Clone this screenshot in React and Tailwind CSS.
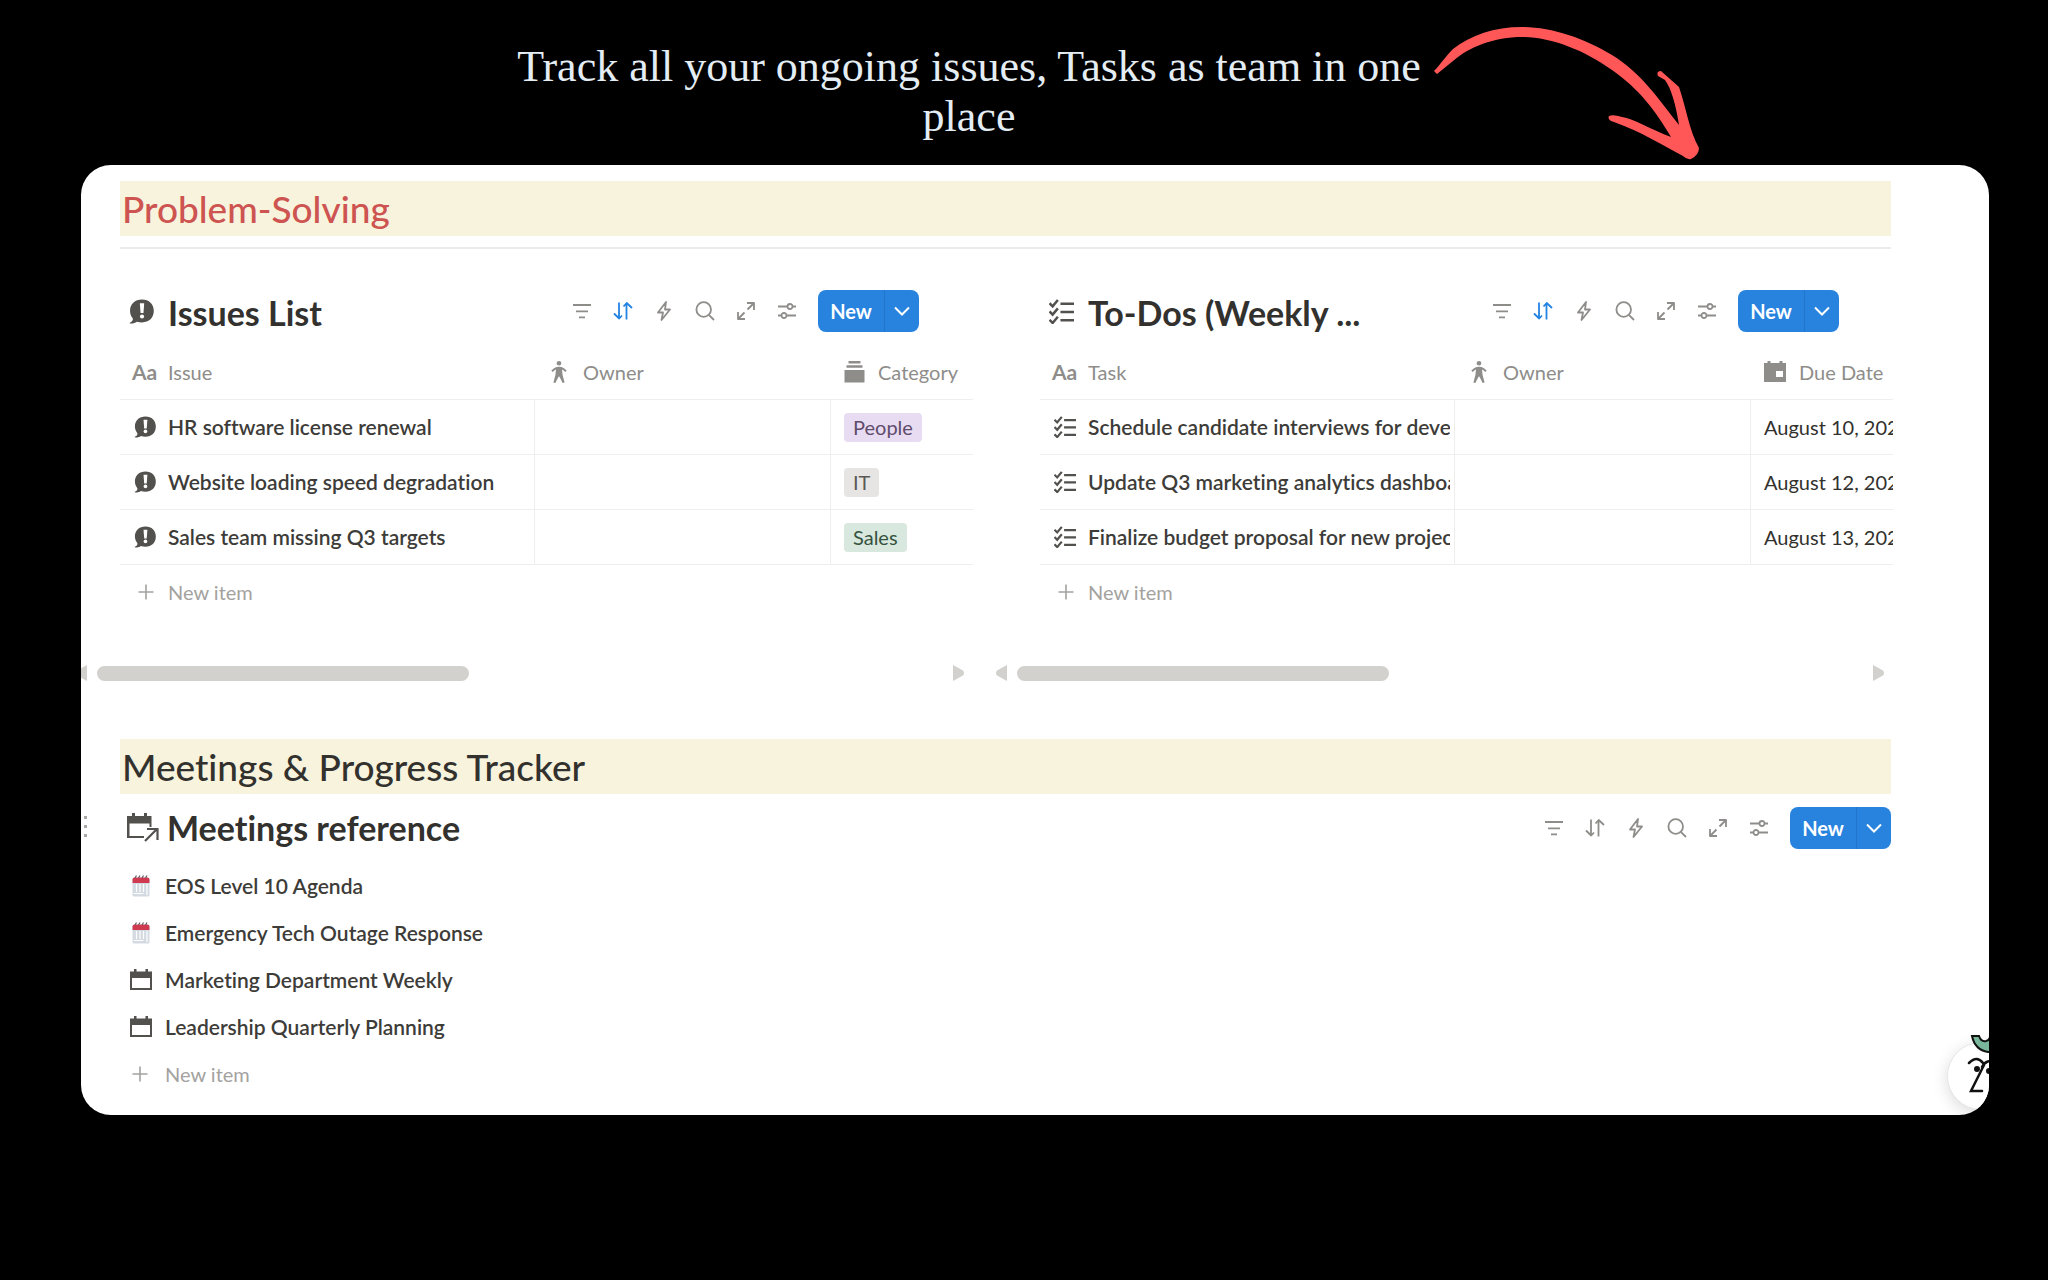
import React from "react";

const issues = [
  {
    name: "HR software license renewal",
    category: "People",
    tag: "bg-[#e7dcf1] text-[#5f4b6c]",
  },
  {
    name: "Website loading speed degradation",
    category: "IT",
    tag: "bg-[#e6e5e3] text-[#5a5956]",
  },
  {
    name: "Sales team missing Q3 targets",
    category: "Sales",
    tag: "bg-[#d8e8de] text-[#35523f]",
  },
];

const todos = [
  { name: "Schedule candidate interviews for developer role", due: "August 10, 2025" },
  { name: "Update Q3 marketing analytics dashboard", due: "August 12, 2025" },
  { name: "Finalize budget proposal for new project", due: "August 13, 2025" },
];

const meetings = [
  { name: "EOS Level 10 Agenda", emoji: true },
  { name: "Emergency Tech Outage Response", emoji: true },
  { name: "Marketing Department Weekly", emoji: false },
  { name: "Leadership Quarterly Planning", emoji: false },
];

const AlertBubble = ({ className }) => (
  <svg viewBox="0 0 24 24" className={className} aria-hidden="true">
    <path
      fill="#52514d"
      d="M12.5 0.5C5.6 0.5 1 5 1 11.2c0 3.300 1.200 5.800 2.700 7.600 0.300 1.900-1 3.200-3 3.900 0 0.600 0.500 0.800 1.300 0.800 2.200 0 4.200-0.700 5.600-1.700 1.400 0.500 3.100 0.700 4.900 0.700 6.800 0 11.300-4.400 11.300-11.100C23.800 5 19.300 0.500 12.500 0.500z"
    />
    <path fill="#fff" d="M10.400 4h4.200l-0.700 9.500h-2.800z" />
    <circle cx="12.500" cy="16.800" r="2" fill="#fff" />
  </svg>
);

const Checklist = ({ className }) => (
  <svg
    viewBox="0 0 24 24"
    className={className}
    fill="none"
    stroke="#52514d"
    strokeWidth="2.4"
    aria-hidden="true"
  >
    <path d="M11 4.500h13M11 12.500h13M11 20.500h13" />
    <path d="M0.500 4l3 3L8.500 1M0.500 12l3 3 5-6M0.500 20l3 3 5-6" />
  </svg>
);

const CalendarIcon = ({ className }) => (
  <svg viewBox="0 0 22 22" className={className} aria-hidden="true">
    <path
      fill="#52514d"
      fillRule="evenodd"
      d="M4 0h2.500v2.500h9V0H18v2.500h4V21H0V2.500h4zM2 9v10h18V9z"
    />
  </svg>
);

const CalendarLinkIcon = () => (
  <svg viewBox="0 0 32 30" className="h-[30px] w-8" aria-hidden="true">
    <path
      fill="#52514d"
      fillRule="evenodd"
      d="M5 0h3v3h9V0h3v3h4.500v11h-2v-3.500H2.500V23H17v2H0V3h5z"
    />
    <path fill="none" stroke="#52514d" strokeWidth="2.200" d="M18 28L29.500 16.500M20 16h10.500v11" />
  </svg>
);

const CalendarEmoji = () => (
  <svg viewBox="0 0 18 22" className="h-[22px] w-[18px]" aria-hidden="true">
    <rect x="0.500" y="3" width="17" height="18.500" rx="1.500" fill="#d3dae2" />
    <path d="M0.500 8h17V4.500a2 2 0 0 0-2-2h-13a2 2 0 0 0-2 2z" fill="#d03a50" />
    <path stroke="#5b5b63" strokeWidth="1.200" d="M3 3l1.500-2.500M6.500 3L8 .5M10 3l1.500-2.500M13.500 3L15 .5" />
    <path stroke="#fff" strokeWidth="1.200" d="M4.500 9v8M8 9v8M11.500 9v8M15 9v11M1.500 18.500h10" />
  </svg>
);

const PersonIcon = () => (
  <svg viewBox="0 0 16 22" className="h-[22px] w-4" fill="#8e8d8a" aria-hidden="true">
    <circle cx="8" cy="2.300" r="2.300" />
    <path d="M0.300 9.800C2 7.500 4.500 5.700 8 5.700s6 1.800 7.700 4.100l-1.400 1.300c-1.100-1.200-2-2-3.300-2.600l0.600 5.500 2 7.500-1.900 0.500L8.300 15.500h-0.600L4.300 22l-1.900-0.500 2-7.500L5 8.500C3.700 9.100 2.800 9.900 1.700 11.100z" />
  </svg>
);

const StackIcon = () => (
  <svg viewBox="0 0 21 22" className="h-[22px] w-[21px]" fill="#8e8d8a" aria-hidden="true">
    <path d="M4.500 0h12v2.400h-12zM2.500 4.200h16v2.600h-16zM0.500 9h20v12.500h-20z" />
  </svg>
);

const DueIcon = () => (
  <svg viewBox="0 0 22 22" className="h-[22px] w-[22px]" fill="#8e8d8a" aria-hidden="true">
    <path fillRule="evenodd" d="M3.500 0h3v2h9V0h3v2H22v19H0V2h3.500zM12 10v6h7v-6z" />
  </svg>
);

const PlusIcon = () => (
  <svg viewBox="0 0 16 16" className="size-4" fill="none" stroke="#a3a29f" strokeWidth="1.600" aria-hidden="true">
    <path d="M8 0.500v15M0.500 8h15" />
  </svg>
);

const AaIcon = () => (
  <span className="font-bold text-[21px] leading-6 text-[#8e8d8a]" aria-hidden="true">
    Aa
  </span>
);

const tools = [
  { label: "Filter", path: "M1 4h18M4 10.300h12M7 16.300h6" },
  { label: "Sort", path: "M6 1.500V18M1 12.500l5.200 5L9 14.500M13.500 18.500V2M10.500 5.500L13.700 2 19 7" },
  { label: "Automations", path: "M12 1L4 11.500h5L7.500 19 16 8.500h-5z" },
  { label: "Search", path: "M14.300 14.300L19 19M16 8.500a7.300 7.300 0 1 1-14.600 0a7.300 7.300 0 1 1 14.600 0z" },
  { label: "Open full page", path: "M2 18L8.500 11.500M11.500 8.500L18 2M11 2h7v7M2 11v7h7" },
  {
    label: "Settings",
    path: "M1 5.500h9.500M15.500 5.500H19M1 14.500h3.500M9.500 14.500H19M15.500 5.500a2.500 2.500 0 1 1-5 0a2.500 2.500 0 1 1 5 0zM9.500 14.500a2.500 2.500 0 1 1-5 0a2.500 2.500 0 1 1 5 0z",
  },
];

const Toolbar = ({ sorted }) => {
  return (
    <div className="flex shrink-0 items-center">
      <div className="mr-[21px] flex items-center gap-[21px]">
        {tools.map((tool) => (
          <button
            key={tool.label}
            aria-label={tool.label}
            className={sorted && tool.label === "Sort" ? "text-[#2383e2]" : "text-[#8e8d8a]"}
          >
            <svg
              viewBox="0 0 20 20"
              className="size-5"
              fill="none"
              stroke="currentColor"
              strokeWidth="1.800"
              strokeLinejoin="round"
            >
              <path d={tool.path} />
            </svg>
          </button>
        ))}
      </div>
      <div className="flex h-[42px] overflow-hidden rounded-lg bg-[#2783de] text-white">
        <button className="w-[66px] text-[20px] font-bold leading-6">New</button>
        <button
          aria-label="More options"
          className="flex w-[35px] items-center justify-center border-l border-[#2076cb]"
        >
          <svg viewBox="0 0 16 10" className="h-[10px] w-4" fill="none" stroke="currentColor" strokeWidth="2">
            <path d="M1 1.500l7 7 7-7" />
          </svg>
        </button>
      </div>
    </div>
  );
};

const Scroller = ({ label }) => (
  <div className="mt-[47px] -ml-[45px] mr-2 flex items-center" aria-label={label}>
    <button aria-label="Scroll left">
      <svg viewBox="0 0 12 16" className="h-4 w-3" fill="#d2d1cd">
        <path d="M12 0v16L2 10.500Q0 8 2 5.500z" />
      </svg>
    </button>
    <div className="mx-[10px] flex-1">
      <div className="h-[15px] w-[44%] rounded-full bg-[#d2d1cd]"></div>
    </div>
    <button aria-label="Scroll right">
      <svg viewBox="0 0 12 16" className="h-4 w-3" fill="#d2d1cd">
        <path d="M0 0v16l10-5.500Q12 8 10 5.500z" />
      </svg>
    </button>
  </div>
);

const Database = ({ title, icon, columns, lastIcon, children }) => {
  const Icon = icon;
  return (
    <div className="min-w-0">
      <div className="flex h-[58px] items-center justify-between pl-[9px] pr-[54px]">
        <h2 className="flex items-center gap-[14px] text-[34px] font-bold leading-10">
          <Icon className="size-[25px]" />
          <span className="pt-1">{title}</span>
        </h2>
        <Toolbar sorted />
      </div>
      <table className="w-full table-fixed border-separate border-spacing-0 text-[20px] leading-6">
        <colgroup>
          <col className="w-[415px]" />
          <col className="w-[296px]" />
          <col />
        </colgroup>
        <thead>
          <tr className="h-[60px] text-left text-[#8e8d8a]">
            <th className="border-b border-[#eeeeec] p-0 pt-1 pl-3 font-normal">
              <div className="flex items-center">
                <div className="w-9">
                  <AaIcon />
                </div>
                {columns[0]}
              </div>
            </th>
            <th className="border-b border-[#eeeeec] p-0 pt-1 pl-4 font-normal">
              <div className="flex items-center gap-4">
                <PersonIcon />
                {columns[1]}
              </div>
            </th>
            <th className="border-b border-[#eeeeec] p-0 pt-1 pl-[13px] font-normal">
              <div className="flex items-center gap-[13px] whitespace-nowrap">
                {lastIcon}
                {columns[2]}
              </div>
            </th>
          </tr>
        </thead>
        <tbody>{children}</tbody>
      </table>
      <button className="flex h-[53px] items-center gap-[14px] pl-[18px] text-[20px] leading-6 text-[#a3a29f]">
        <PlusIcon />
        New item
      </button>
      <Scroller label={title} />
    </div>
  );
};

const Row = ({ icon, name, children }) => {
  const Icon = icon;
  return (
    <tr className="h-[55px]">
      <td className="border-b border-r border-[#eeeeec] p-0 pl-[14px] pr-1">
        <div className="flex items-center gap-3 overflow-hidden whitespace-nowrap text-[21px] font-semibold text-[#3d3c39]">
          <Icon className="size-[22px] shrink-0" />
          {name}
        </div>
      </td>
      <td className="border-b border-r border-[#eeeeec] p-0"></td>
      <td className="overflow-hidden whitespace-nowrap border-b border-[#eeeeec] p-0 pl-[13px]">{children}</td>
    </tr>
  );
};

const Arrow = () => (
  <svg viewBox="1430 20 275 145" className="absolute left-full top-5 h-[145px] w-[275px]" aria-hidden="true">
    <path
      fill="#ff5757"
      d="M1434 71C1440 65 1445 57 1453 49C1471 35 1494 27 1522 27C1551 27 1584 38 1612 55C1642 74 1657 97 1679 125C1676 105 1671 88 1665 80L1658 76Q1656 71 1661 71L1679 87C1686 107 1689 130 1699 148Q1699 155 1691 159Q1687 160 1683 156C1664 146 1640 131 1614 122Q1607 120 1609 116Q1613 114 1622 117C1634 119 1650 129 1671 137C1655 110 1640 90 1612 70C1584 50 1551 37 1522 37C1494 37 1469 47 1453 61L1437 74Z"
    />
  </svg>
);

const Assistant = () => (
  <button
    aria-label="Open assistant"
    className="absolute -right-[26px] bottom-[5px] size-[68px] rounded-full border border-[#e6e6e4] bg-white shadow-[0_4px_16px_rgba(0,0,0,0.14)]"
  >
    <svg viewBox="0 0 68 78" className="absolute -top-[10px] left-0 h-[78px] w-[68px]" fill="none" stroke="#111" strokeWidth="2">
      <path fill="#79b69c" d="M24 3h7q2 6 7 5 4-1 4-5h10q-2 15-12 16Q27 17 24 3z" />
      <path strokeLinecap="round" strokeWidth="2.500" d="M21 30q8-8 14 0M34 34q5-9 13-4M36 32L23 58h11" />
      <circle cx="29" cy="36" r="2" fill="#111" />
      <circle cx="41" cy="38" r="2" fill="#111" />
    </svg>
  </button>
);

const App = () => {
  return (
    <div className="min-h-screen bg-black pb-[165px] font-['Lato',sans-serif] text-[#32312e] [font-variant-ligatures:none]">
      <header className="relative mx-auto w-full max-w-[922px] -translate-x-[55px] pt-[42px] pb-[23px]">
        <h1 className="text-center font-['Liberation_Serif',serif] text-[44px] leading-[50px] text-[#e4edf4]">
          Track all your ongoing issues, Tasks as team in one place
        </h1>
        <Arrow />
      </header>

      <main className="relative ml-[81px] mr-[59px] overflow-hidden rounded-[30px] bg-white pt-4 pb-[18px] pl-[39px] pr-[98px]">
        <h2 className="bg-[#f8f3dc] px-0.5 text-[37px] font-medium leading-[55px] text-[#cd5450]">
          Problem-Solving
        </h2>
        <hr className="mt-[11px] border-t-2 border-[#ebebea]" />

        <section className="-mr-0.5 mt-[33px] grid grid-cols-2 gap-[67px]">
          <Database
            title="Issues List"
            icon={AlertBubble}
            columns={["Issue", "Owner", "Category"]}
            lastIcon={<StackIcon />}
          >
            {issues.map((issue) => (
              <Row key={issue.name} icon={AlertBubble} name={issue.name}>
                <span className={`inline-block rounded px-[9px] leading-[29px] ${issue.tag}`}>
                  {issue.category}
                </span>
              </Row>
            ))}
          </Database>
          <Database
            title="To-Dos (Weekly ..."
            icon={Checklist}
            columns={["Task", "Owner", "Due Date"]}
            lastIcon={<DueIcon />}
          >
            {todos.map((todo) => (
              <Row key={todo.name} icon={Checklist} name={todo.name}>
                {todo.due}
              </Row>
            ))}
          </Database>
        </section>

        <h2 className="mt-[58px] bg-[#f8f3dc] px-0.5 text-[37px] font-medium leading-[55px]">
          Meetings & Progress Tracker
        </h2>
        <section className="relative">
          <button aria-label="Drag block" className="absolute -left-9 top-[22px] grid gap-[6px]">
            <span className="size-[3px] bg-[#aaa9a6]"></span>
            <span className="size-[3px] bg-[#aaa9a6]"></span>
            <span className="size-[3px] bg-[#aaa9a6]"></span>
          </button>
          <div className="flex h-[68px] items-center justify-between pl-[7px]">
            <h2 className="flex items-center gap-2 text-[34px] font-bold leading-10">
              <CalendarLinkIcon />
              Meetings reference
            </h2>
            <Toolbar />
          </div>
          <ul className="text-[21px] font-semibold text-[#3d3c39]">
            {meetings.map((meeting) => (
              <li key={meeting.name}>
                <a href="#" className="flex h-[47px] items-center leading-6">
                  <span className="flex w-[42px] justify-center">
                    {meeting.emoji ? <CalendarEmoji /> : <CalendarIcon className="size-[22px]" />}
                  </span>
                  <span className="pl-[3px]">{meeting.name}</span>
                </a>
              </li>
            ))}
          </ul>
          <button className="flex h-[47px] items-center gap-[17px] pl-3 text-[20px] leading-6 text-[#a3a29f]">
            <PlusIcon />
            New item
          </button>
        </section>
        <Assistant />
      </main>
    </div>
  );
};

export default App;
